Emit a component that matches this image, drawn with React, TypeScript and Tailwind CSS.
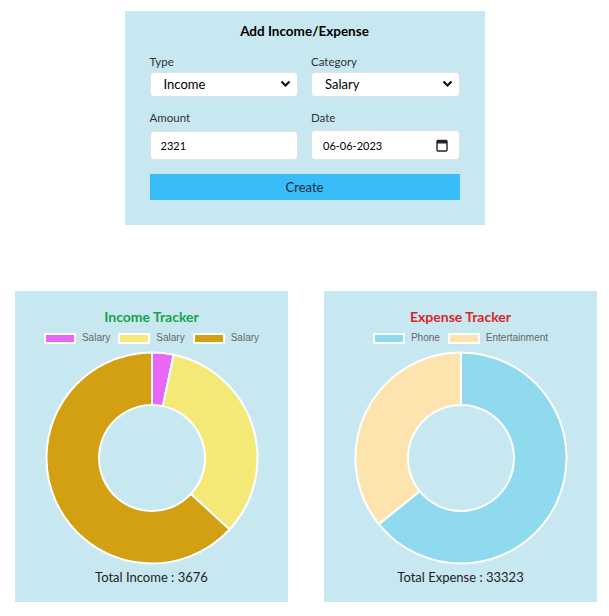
import React from 'react';

type Slice = { label: string; value: number; color: string };

const polar = (cx: number, cy: number, rad: number, deg: number) => {
  const a = ((deg - 90) * Math.PI) / 180;
  return [cx + rad * Math.cos(a), cy + rad * Math.sin(a)];
};

const arcPath = (cx: number, cy: number, R: number, r: number, a0: number, a1: number) => {
  const large = a1 - a0 > 180 ? 1 : 0;
  const [x0, y0] = polar(cx, cy, R, a0);
  const [x1, y1] = polar(cx, cy, R, a1);
  const [x2, y2] = polar(cx, cy, r, a1);
  const [x3, y3] = polar(cx, cy, r, a0);
  return `M ${x0} ${y0} A ${R} ${R} 0 ${large} 1 ${x1} ${y1} L ${x2} ${y2} A ${r} ${r} 0 ${large} 0 ${x3} ${y3} Z`;
};

function Donut({ data }: { data: Slice[] }) {
  const total = data.reduce((s, d) => s + d.value, 0);
  let start = 0;
  return (
    <svg width="216" height="216" viewBox="0 0 216 216">
      {data.map((d, i) => {
        const sweep = (d.value / total) * 360;
        const path = arcPath(108, 108, 105.5, 53, start, start + sweep);
        start += sweep;
        return <path key={i} d={path} fill={d.color} stroke="#ffffff" strokeWidth="2" strokeLinejoin="round" />;
      })}
    </svg>
  );
}

function TrackerCard({
  title,
  titleColor,
  data,
  totalLabel,
}: {
  title: string;
  titleColor: string;
  data: Slice[];
  totalLabel: string;
}) {
  const total = data.reduce((s, d) => s + d.value, 0);
  return (
    <div className="w-[273px] h-[311px] bg-[#c8e8f1] flex flex-col items-center pt-[17px]">
      <h2 className={`text-[14px] leading-[18px] font-bold ${titleColor}`}>{title}</h2>
      <div className="flex items-center gap-[8px] mt-[6px] h-[12px]">
        {data.map((d, i) => (
          <div key={i} className="flex items-center gap-[6px]">
            <span className="w-[32px] h-[11px] border-2 border-white" style={{ backgroundColor: d.color }} />
            <span className="text-[10px] leading-[12px] text-[#666666] font-['Liberation_Sans',Arial,sans-serif]">
              {d.label}
            </span>
          </div>
        ))}
      </div>
      <div className="mt-[6px]">
        <Donut data={data} />
      </div>
      <p className="mt-[2px] text-[13px] leading-[18px] text-[#222]">
        {totalLabel} : {total}
      </p>
    </div>
  );
}

const incomeData: Slice[] = [
  { label: 'Salary', value: 121, color: '#e868f5' },
  { label: 'Salary', value: 1234, color: '#f4e977' },
  { label: 'Salary', value: 2321, color: '#d39f13' },
];

const expenseData: Slice[] = [
  { label: 'Phone', value: 21400, color: '#8fdaef' },
  { label: 'Entertainment', value: 11923, color: '#fde4ae' },
];

function Chevron() {
  return (
    <svg width="11" height="8" viewBox="0 0 11 8" className="absolute right-[7px] top-[9px] pointer-events-none">
      <path d="M1.5 1.5 L5.5 5.5 L9.5 1.5" fill="none" stroke="#111" strokeWidth="2.2" />
    </svg>
  );
}

function CalendarIcon() {
  return (
    <svg width="12" height="13" viewBox="0 0 12 13" className="absolute right-[12px] top-[9px] pointer-events-none">
      <rect x="1" y="1.5" width="10" height="10.5" rx="1" fill="none" stroke="#222" strokeWidth="1.4" />
      <rect x="1" y="1.5" width="10" height="3" fill="#222" />
    </svg>
  );
}

export default function App() {
  return (
    <div className="w-[609px] min-h-[616px] bg-white font-['Lato',sans-serif]">
      {/* Add income / expense form */}
      <div className="pt-[11px] flex justify-center">
        <div className="w-[360px] h-[214px] bg-[#c8e8f1] px-[25px] pt-[10px] flex flex-col">
          <h1 className="text-center text-[13.5px] leading-[20px] font-bold text-black">Add Income/Expense</h1>
          <div className="grid grid-cols-2 gap-x-[13px] mt-[13px]">
            <div className="flex flex-col">
              <label className="text-[11.5px] leading-[15px] text-[#333]">Type</label>
              <div className="relative mt-[2px]">
                <select
                  defaultValue="Income"
                  className="appearance-none w-full h-[25px] rounded-[4px] bg-white border border-[#e2e2e2] pl-[13px] text-[13px] text-black outline-none"
                >
                  <option>Income</option>
                  <option>Expense</option>
                </select>
                <Chevron />
              </div>
            </div>
            <div className="flex flex-col">
              <label className="text-[11.5px] leading-[15px] text-[#333]">Category</label>
              <div className="relative mt-[2px]">
                <select
                  defaultValue="Salary"
                  className="appearance-none w-full h-[25px] rounded-[4px] bg-white border border-[#e2e2e2] pl-[13px] text-[13px] text-black outline-none"
                >
                  <option>Salary</option>
                  <option>Phone</option>
                  <option>Entertainment</option>
                </select>
                <Chevron />
              </div>
            </div>
            <div className="flex flex-col mt-[13px]">
              <label className="text-[11.5px] leading-[15px] text-[#333]">Amount</label>
              <input
                readOnly
                value="2321"
                className="mt-[6px] h-[29px] rounded-[4px] bg-white border border-[#e2e2e2] pl-[10px] text-[11px] text-black outline-none"
              />
            </div>
            <div className="flex flex-col mt-[13px]">
              <label className="text-[11.5px] leading-[15px] text-[#333]">Date</label>
              <div className="relative mt-[5px]">
                <input
                  readOnly
                  value="06-06-2023"
                  className="w-full h-[30px] rounded-[4px] bg-white border border-[#e2e2e2] pl-[11px] text-[11px] text-black outline-none"
                />
                <CalendarIcon />
              </div>
            </div>
          </div>
          <button className="mt-[14px] h-[26px] w-full bg-[#38bdf8] text-[13px] text-[#1f2937]">Create</button>
        </div>
      </div>

      {/* Trackers */}
      <div className="mt-[66px] flex gap-[36px] pl-[15px]">
        <TrackerCard title="Income Tracker" titleColor="text-[#16a34a]" data={incomeData} totalLabel="Total Income" />
        <TrackerCard title="Expense Tracker" titleColor="text-[#dc2626]" data={expenseData} totalLabel="Total Expense" />
      </div>
    </div>
  );
}
